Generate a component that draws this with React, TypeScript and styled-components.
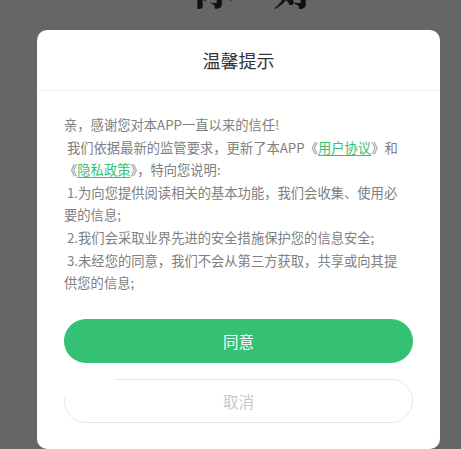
import React, { useState } from "react";
import styled, { createGlobalStyle } from "styled-components";

const GlobalStyle = createGlobalStyle`
  html, body {
    margin: 0;
    padding: 0;
    background: #666666;
  }
  body {
    font-family: "Noto Sans CJK SC", "Noto Sans", sans-serif;
  }
`;

const App: React.FC = () => {
  const [open, setOpen] = useState<boolean>(true);

  return (
    <Page>
      <GlobalStyle />
      <Backdrop>
        <Greeting>你·好·</Greeting>
      </Backdrop>
      {open && (
        <Overlay>
          <Dialog>
            <DialogHeader>温馨提示</DialogHeader>
            <DialogBody>
              <Paragraph>亲，感谢您对本APP一直以来的信任!</Paragraph>
              <Paragraph>
                {" "}我们依据最新的监管要求，更新了本APP《<Link>用户协议</Link>》和
                <br />《<Link>隐私政策</Link>》，特向您说明:
              </Paragraph>
              <Paragraph>
                {" "}1.为向您提供阅读相关的基本功能，我们会收集、使用必要的信息;
              </Paragraph>
              <Paragraph>
                {" "}2.我们会采取业界先进的安全措施保护您的信息安全;
              </Paragraph>
              <Paragraph>
                {" "}3.未经您的同意，我们不会从第三方获取，共享或向其提供您的信息;
              </Paragraph>
            </DialogBody>
            <Actions>
              <ActionButton primary onClick={() => setOpen(false)}>
                同意
              </ActionButton>
              <ActionButton onClick={() => setOpen(false)}>取消</ActionButton>
            </Actions>
          </Dialog>
        </Overlay>
      )}
    </Page>
  );
};

const Page = styled.div`
  position: relative;
  width: 100%;
  height: 449px;
  overflow: hidden;
  background: #666666;
`;

const Backdrop = styled.div`
  display: flex;
  justify-content: center;
  padding-left: 86px;
  margin-top: -46px;
`;

const Greeting = styled.h1`
  margin: 0;
  font-family: "Noto Serif CJK SC", "Noto Sans CJK SC", serif;
  font-size: 44px;
  font-weight: 700;
  letter-spacing: 12px;
  color: #111111;
`;

const Overlay = styled.div`
  position: absolute;
  inset: 0;
  padding: 30px 0 0 37px;
`;

const Dialog = styled.div`
  width: 403px;
  background: #ffffff;
  border-radius: 10px;
  padding-bottom: 26px;
`;

const DialogHeader = styled.div`
  height: 60px;
  display: flex;
  align-items: center;
  justify-content: center;
  border-bottom: 1px solid #efefef;
  font-size: 18px;
  color: #333333;
`;

const DialogBody = styled.div`
  padding: 23px 27px 0 27px;
  width: 343px;
  font-size: 13.3px;
  line-height: 22.6px;
  color: #808080;
  white-space: pre-wrap;
`;

const Paragraph = styled.p`
  margin: 0;
`;

const Link = styled.span`
  color: #35c172;
  text-decoration: underline;
  text-underline-offset: 2px;
`;

const Actions = styled.div`
  display: flex;
  flex-direction: column;
  gap: 16px;
  padding: 24px 27px 0 27px;
`;

const ActionButton = styled.button<{ primary?: boolean }>`
  position: relative;
  height: 44px;
  border-radius: 22px;
  box-sizing: border-box;
  font-family: "Noto Sans CJK SC", "Noto Sans", sans-serif;
  font-size: 15.5px;
  cursor: pointer;
  background: ${(p) => (p.primary ? "#35c173" : "#ffffff")};
  color: ${(p) => (p.primary ? "#ffffff" : "#c8c8c8")};
  border: ${(p) => (p.primary ? "none" : "1px solid #ece6e4")};

  &::before {
    content: "";
    display: ${(p) => (p.primary ? "none" : "block")};
    position: absolute;
    top: -1px;
    left: -1px;
    width: 50px;
    height: 19px;
    background: #ffffff;
  }
`;

export default App;
